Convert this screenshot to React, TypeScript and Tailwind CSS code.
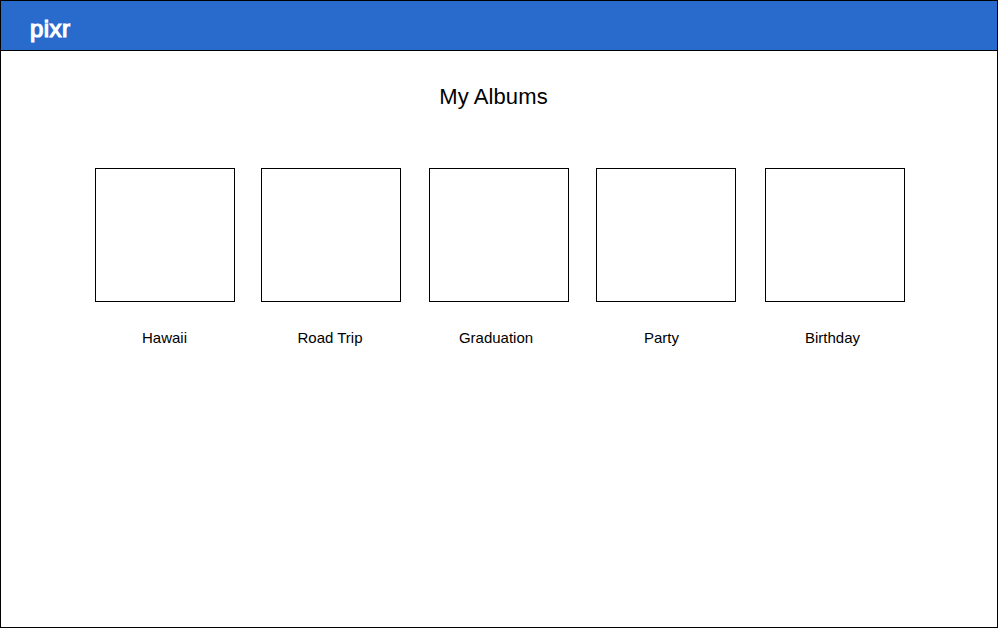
const albums = [
  { name: "Hawaii", box: "ml-[95px]", label: "pr-px" },
  { name: "Road Trip", box: "ml-[26px]", label: "pr-[2px]" },
  { name: "Graduation", box: "ml-[28px]", label: "pr-[6px]" },
  { name: "Party", box: "ml-[27px]", label: "pr-[9px]" },
  { name: "Birthday", box: "ml-[29px]", label: "pr-[5px]" },
];

export default function App() {
  return (
    <div className="flex h-[628px] w-[998px] flex-col border border-black bg-white font-['Liberation_Sans',Arial,sans-serif] text-black">
      <header className="h-[50px] shrink-0 border-b border-black bg-[#296bcd] pt-[14px] pl-[28px]">
        <div className="pl-px text-[24px] leading-[28px] tracking-[0.4px] text-white [-webkit-text-stroke:1.2px_white]">pixr</div>
      </header>
      <main>
        <h1 className="mt-[33px] pr-[11px] text-center text-[22px] leading-[26px] tracking-[0.1px]">My Albums</h1>
        <div className="-ml-px mt-[58px] flex">
          {albums.map((album) => (
            <section key={album.name} className={`w-[140px] shrink-0 ${album.box}`}>
              <div className="h-[134px] border border-black" />
              <p className={`mt-[27px] text-center text-[15px] leading-[18px] ${album.label}`}>{album.name}</p>
            </section>
          ))}
        </div>
      </main>
    </div>
  );
}
